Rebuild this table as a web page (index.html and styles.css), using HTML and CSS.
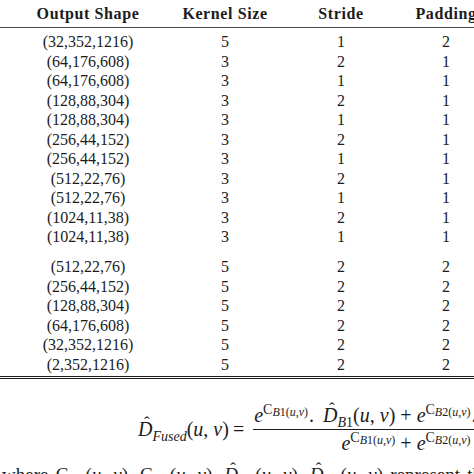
FILE: index.html
```html
<!DOCTYPE html>
<html lang="en">
<head>
<meta charset="utf-8">
<title>Decoder layers</title>
<link rel="stylesheet" href="styles.css">
</head>
<body>
<div class="page">
  <div class="table">
    <div class="row head"><div>Output Shape</div><div>Kernel Size</div><div>Stride</div><div>Padding</div></div>
    <div class="tbody">
      <div class="group">
        <div class="row"><div>(32,352,1216)</div><div>5</div><div>1</div><div>2</div></div>
        <div class="row"><div>(64,176,608)</div><div>3</div><div>2</div><div>1</div></div>
        <div class="row"><div>(64,176,608)</div><div>3</div><div>1</div><div>1</div></div>
        <div class="row"><div>(128,88,304)</div><div>3</div><div>2</div><div>1</div></div>
        <div class="row"><div>(128,88,304)</div><div>3</div><div>1</div><div>1</div></div>
        <div class="row"><div>(256,44,152)</div><div>3</div><div>2</div><div>1</div></div>
        <div class="row"><div>(256,44,152)</div><div>3</div><div>1</div><div>1</div></div>
        <div class="row"><div>(512,22,76)</div><div>3</div><div>2</div><div>1</div></div>
        <div class="row"><div>(512,22,76)</div><div>3</div><div>1</div><div>1</div></div>
        <div class="row"><div>(1024,11,38)</div><div>3</div><div>2</div><div>1</div></div>
        <div class="row"><div>(1024,11,38)</div><div>3</div><div>1</div><div>1</div></div>
      </div>
      <div class="group">
        <div class="row"><div>(512,22,76)</div><div>5</div><div>2</div><div>2</div></div>
        <div class="row"><div>(256,44,152)</div><div>5</div><div>2</div><div>2</div></div>
        <div class="row"><div>(128,88,304)</div><div>5</div><div>2</div><div>2</div></div>
        <div class="row"><div>(64,176,608)</div><div>5</div><div>2</div><div>2</div></div>
        <div class="row"><div>(32,352,1216)</div><div>5</div><div>2</div><div>2</div></div>
        <div class="row"><div>(2,352,1216)</div><div>5</div><div>2</div><div>2</div></div>
      </div>
    </div>
  </div>

  <div class="eq">
    <span class="lhs"><i class="hat">D</i><span class="sb"><i>Fused</i></span>(<i>u</i>, <i>v</i>)</span>
    <span class="eqs">=</span>
    <span class="frac">
      <span class="num"><i>e</i><span class="sp">C<span class="ss"><i>B</i>1(<i>u</i>,<i>v</i>)</span></span><span class="dot">.</span> <i class="hat">D</i><span class="sb"><i>B</i>1</span>(<i>u</i>, <i>v</i>) + <i>e</i><span class="sp">C<span class="ss"><i>B</i>2(<i>u</i>,<i>v</i>)</span></span><span class="dot">.</span> <i class="hat">D</i><span class="sb"><i>B</i>2</span>(<i>u</i>, <i>v</i>)</span>
      <span class="den"><i>e</i><span class="sp">C<span class="ss"><i>B</i>1(<i>u</i>,<i>v</i>)</span></span> + <i>e</i><span class="sp">C<span class="ss"><i>B</i>2(<i>u</i>,<i>v</i>)</span></span></span>
    </span>
  </div>

  <p class="where">where C<span class="sb"><i>B</i>1</span>(<i>u</i>, <i>v</i>), C<span class="sb"><i>B</i>2</span>(<i>u</i>, <i>v</i>), <i class="hat">D</i><span class="sb"><i>B</i>1</span>(<i>u</i>, <i>v</i>), <i class="hat">D</i><span class="sb"><i>B</i>2</span>(<i>u</i>, <i>v</i>) represent the confidence maps</p>
</div>
</body>
</html>
```

FILE: styles.css
```css
html, body {
  margin: 0;
  padding: 0;
  background: #fff;
}

body {
  width: 474px;
  height: 474px;
  overflow: hidden;
  color: #1c1c1c;
  font-family: "Liberation Serif", "Times New Roman", serif;
}

.page {
  width: 474px;
}

.table {
  width: 484px;
}

.row {
  display: grid;
  grid-template-columns: 176px 98px 134px 76px;
  text-align: center;
  white-space: nowrap;
}

.head {
  height: 27px;
  line-height: 27px;
  font-size: 16px;
  font-weight: bold;
  letter-spacing: 0.6px;
  border-bottom: 1px solid #4a4a4a;
}

.tbody {
  padding: 4px 0 2px;
  border-bottom: 3px double #1c1c1c;
}

.tbody .row {
  height: 19.5px;
  line-height: 19.5px;
  font-size: 16px;
}

.group + .group {
  margin-top: 10.5px;
}

/* equation */
.eq {
  display: flex;
  align-items: center;
  padding: 25px 0 0 138px;
  font-size: 20px;
  white-space: nowrap;
}

.lhs {
  line-height: 22px;
}

.eqs {
  margin: 0 9px 0 4px;
  line-height: 22px;
}

.frac {
  display: flex;
  flex-direction: column;
  align-items: center;
  flex-shrink: 0;
}

.num {
  line-height: 22px;
  padding: 0 1px 3px;
  border-bottom: 1px solid #1c1c1c;
}

.den {
  line-height: 22px;
  padding-top: 2px;
}

.dot {
  margin: 0 4px 0 1px;
}

.hat {
  position: relative;
  display: inline-block;
}

.hat::after {
  content: "\02C6";
  position: absolute;
  left: 6px;
  top: -6px;
  font-style: normal;
  font-size: 17px;
}

.sp {
  font-size: 14px;
  line-height: 0;
  vertical-align: 8px;
}

.ss {
  font-size: 12px;
  vertical-align: -2px;
}

.sb {
  font-size: 14px;
  line-height: 0;
  vertical-align: -5px;
}

.where {
  margin: 11px 0 0 2px;
  font-size: 19px;
  line-height: 20px;
  word-spacing: 2.5px;
  white-space: nowrap;
}

.where .sb {
  padding: 0 1px 0 0.5px;
}
```
